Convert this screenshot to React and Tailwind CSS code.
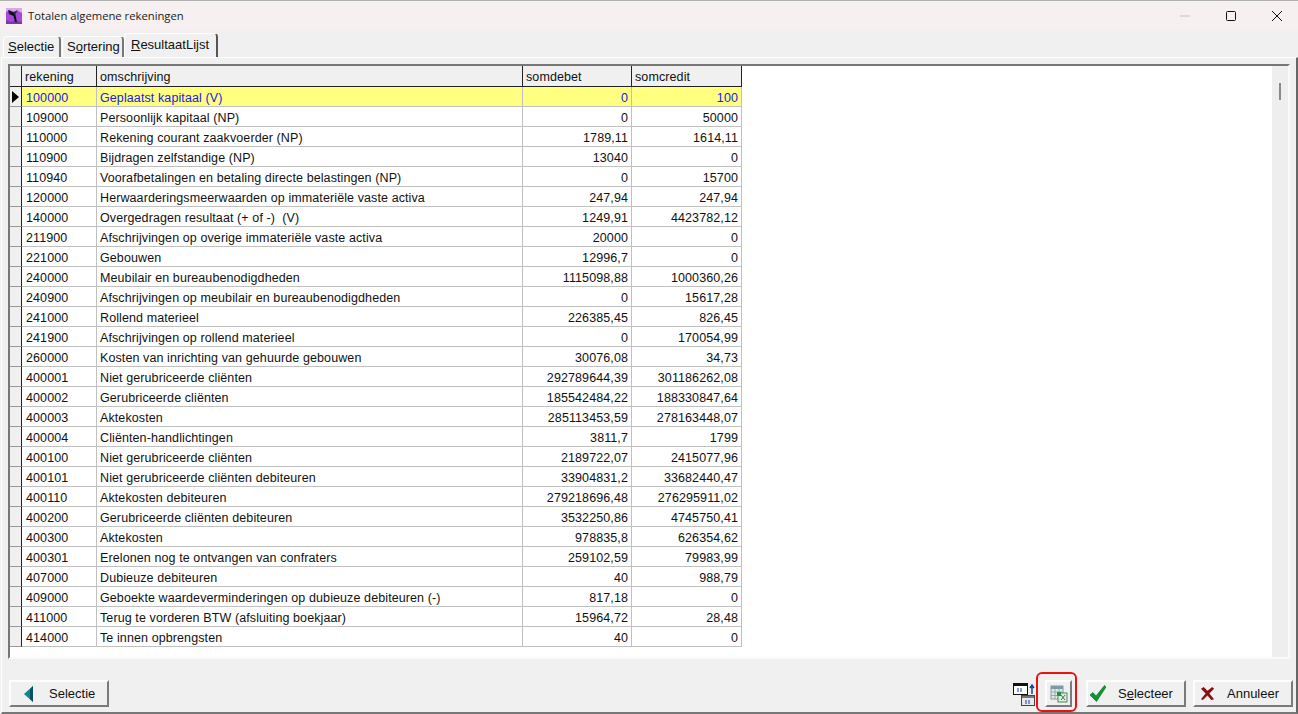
import React from 'react';

const ROWS = [
  ['100000', 'Geplaatst kapitaal (V)', '0', '100'],
  ['109000', 'Persoonlijk kapitaal (NP)', '0', '50000'],
  ['110000', 'Rekening courant zaakvoerder (NP)', '1789,11', '1614,11'],
  ['110900', 'Bijdragen zelfstandige (NP)', '13040', '0'],
  ['110940', 'Voorafbetalingen en betaling directe belastingen (NP)', '0', '15700'],
  ['120000', 'Herwaarderingsmeerwaarden op immateriële vaste activa', '247,94', '247,94'],
  ['140000', 'Overgedragen resultaat (+ of -)  (V)', '1249,91', '4423782,12'],
  ['211900', 'Afschrijvingen op overige immateriële vaste activa', '20000', '0'],
  ['221000', 'Gebouwen', '12996,7', '0'],
  ['240000', 'Meubilair en bureaubenodigdheden', '1115098,88', '1000360,26'],
  ['240900', 'Afschrijvingen op meubilair en bureaubenodigdheden', '0', '15617,28'],
  ['241000', 'Rollend materieel', '226385,45', '826,45'],
  ['241900', 'Afschrijvingen op rollend materieel', '0', '170054,99'],
  ['260000', 'Kosten van inrichting van gehuurde gebouwen', '30076,08', '34,73'],
  ['400001', 'Niet gerubriceerde cliënten', '292789644,39', '301186262,08'],
  ['400002', 'Gerubriceerde cliënten', '185542484,22', '188330847,64'],
  ['400003', 'Aktekosten', '285113453,59', '278163448,07'],
  ['400004', 'Cliënten-handlichtingen', '3811,7', '1799'],
  ['400100', 'Niet gerubriceerde cliënten', '2189722,07', '2415077,96'],
  ['400101', 'Niet gerubriceerde cliënten debiteuren', '33904831,2', '33682440,47'],
  ['400110', 'Aktekosten debiteuren', '279218696,48', '276295911,02'],
  ['400200', 'Gerubriceerde cliënten debiteuren', '3532250,86', '4745750,41'],
  ['400300', 'Aktekosten', '978835,8', '626354,62'],
  ['400301', 'Erelonen nog te ontvangen van confraters', '259102,59', '79983,99'],
  ['407000', 'Dubieuze debiteuren', '40', '988,79'],
  ['409000', 'Geboekte waardeverminderingen op dubieuze debiteuren (-)', '817,18', '0'],
  ['411000', 'Terug te vorderen BTW (afsluiting boekjaar)', '15964,72', '28,48'],
  ['414000', 'Te innen opbrengsten', '40', '0'],
];

const COLS = 'grid grid-cols-[12px_75px_426px_109px_110px]';
const HEAD = 'h-[21px] border-r border-r-[#222] border-b border-b-[#222] pl-[3px] pt-[2px]';

function Bevel({ className = '', children }) {
  return (
    <button className={`flex items-center bg-[#f0f0f0] border-2 border-t-[#fdfdfd] border-l-[#fdfdfd] border-r-[#7a7a7a] border-b-[#7a7a7a] ${className}`}>
      {children}
    </button>
  );
}

function Row({ row, active }) {
  const cell = `h-5 border-r border-b border-[#c0c0c0] pt-[2px] truncate whitespace-pre ${active ? 'bg-[#ffff80] text-[#2020e0]' : 'bg-white text-[#111]'}`;
  return (
    <div className={COLS}>
      <div className="h-5 bg-[#f0f0f0] border-r border-r-[#222] border-b border-b-[#999] flex items-center">
        {active && (
          <svg width="8" height="12" viewBox="0 0 8 12" className="ml-[2px]">
            <path d="M0 0 L7 6 L0 12 Z" fill="#000" />
          </svg>
        )}
      </div>
      <div className={`${cell} pl-1`}>{row[0]}</div>
      <div className={`${cell} pl-[3px]`}>{row[1]}</div>
      <div className={`${cell} text-right pr-[3px]`}>{row[2]}</div>
      <div className={`${cell} text-right pr-[3px]`}>{row[3]}</div>
    </div>
  );
}

function AppIcon() {
  return (
    <svg width="16" height="16" viewBox="0 0 16 16">
      <rect width="16" height="16" fill="#a848d8" />
      <path d="M0 0h16v5L12 3 8 4 4 2 0 4z" fill="#d8a8ec" />
      <path d="M0 12l4 2 5-1 7 1v2H0z" fill="#7838a8" />
      <path d="M2 2 L7 4 L9 5 L11 14 L9 14 L7.5 8 L3 6 Z" fill="#101018" />
      <path d="M7 4 L12 2 L9 7 Z" fill="#303048" />
    </svg>
  );
}

export default function App() {
  return (
    <div className="w-[1298px] h-[714px] overflow-hidden bg-[#f0f0f0] flex flex-col relative font-['Liberation_Sans',sans-serif] text-[12.5px] tracking-[0.1px] text-[#111]">
      {/* title bar */}
      <div className="h-[31px] shrink-0 bg-[#f6f0f0] border-t border-t-[#b0b0b0] flex items-center pl-[6px]">
        <AppIcon />
        <span className="ml-[6px] font-['Open_Sans',sans-serif] text-[11.25px] tracking-normal text-[#222]">Totalen algemene rekeningen</span>
        <div className="ml-auto -mr-[2px] flex items-center">
          <svg width="46" height="30" viewBox="0 0 46 30"><path d="M18 15h10" stroke="#c4c0c0" /></svg>
          <svg width="46" height="30" viewBox="0 0 46 30"><rect x="18.5" y="10.5" width="9" height="9" rx="1" fill="none" stroke="#111" /></svg>
          <svg width="46" height="30" viewBox="0 0 46 30"><path d="M18 10l10 10M28 10L18 20" stroke="#111" fill="none" /></svg>
        </div>
      </div>

      {/* tabs */}
      <div className="h-[26px] shrink-0 flex items-end pl-[3px] text-[13px] tracking-normal">
        <div className="w-[58px] h-[21px] pl-1 border-t border-l border-t-white border-l-white border-r-2 border-r-[#777] rounded-t-sm"><u>S</u>electie</div>
        <div className="w-[62px] h-[21px] pl-1 ml-[1px] border-t border-l border-t-white border-l-white border-r-2 border-r-[#777] rounded-t-sm">S<u>o</u>rtering</div>
        <div className="w-[94px] h-[24px] pl-[6px] pt-[1px] border-t border-l border-t-white border-l-white border-r-2 border-r-[#555] rounded-t-sm bg-[#f0f0f0] relative z-10"><u>R</u>esultaatLijst</div>
      </div>

      {/* panel */}
      <div className="flex-1 min-h-0 flex flex-col border-t border-t-white border-l border-l-white border-b-2 border-b-[#777] border-r-2 border-r-[#666] ml-[1px]">
        <div className="h-[595px] shrink-0 mt-[6px] ml-[6px] mr-[6px] border-t-2 border-t-[#777] border-l-2 border-l-[#777] border-r-2 border-r-[#fafafa] border-b-2 border-b-[#fafafa] bg-white flex overflow-hidden">
          <div className="flex-1 min-w-0 flex flex-col">
            <div className={`${COLS} bg-[#f0f0f0] w-[732px]`}>
              <div className={HEAD} />
              <div className={HEAD}>rekening</div>
              <div className={HEAD}>omschrijving</div>
              <div className={HEAD}>somdebet</div>
              <div className={HEAD}>somcredit</div>
            </div>
            {ROWS.map((row, i) => (
              <Row key={row[0] + i} row={row} active={i === 0} />
            ))}
          </div>
          {/* scrollbar */}
          <div className="w-[16px] shrink-0 bg-[#eeeeee] flex justify-center pt-[17px]">
            <div className="w-[2px] h-[17px] bg-[#8a8a8a]" />
          </div>
        </div>

        {/* bottom buttons */}
        <div className="flex-1 flex items-start pl-[7px] pr-[3px] pt-[21px]">
          <Bevel className="w-[100px] h-[27px] pl-[13px] text-[13px] tracking-normal">
            <svg width="10" height="16" viewBox="0 0 10 16"><path d="M9 0v16L0 8z" fill="#0a8a8a" /><path d="M9 0v16L6 13V3z" fill="#0a5060" /></svg>
            <span className="ml-[15px]">Selectie</span>
          </Bevel>
          <div className="ml-auto flex items-center">
            <button className="w-[25px] h-[27px] flex items-center justify-center">
              <svg width="24" height="24" viewBox="0 0 24 24">
                <rect x="1.5" y="1.5" width="14" height="11" fill="#fff" stroke="#111" />
                <path d="M2 2h13v2H2z" fill="#111" />
                <path d="M5 7h2M8 7h2M5 9h2M8 9h2" stroke="#1a3ab0" />
                <rect x="9.5" y="13.5" width="13" height="10" fill="#e8e8e8" stroke="#444" />
                <path d="M10 14h12v2H10z" fill="#777" />
                <path d="M13 19h2M16 19h2M13 21h2M16 21h2" stroke="#1a3ab0" />
                <path d="M20 12V4M18 6l2-3 2 3" stroke="#0a4a8a" strokeWidth="1.5" fill="none" />
              </svg>
            </button>
            <div className="relative ml-[9px]">
              <Bevel className="w-[27px] h-[27px] justify-center">
                <svg width="18" height="18" viewBox="0 0 18 18">
                  <rect x="1" y="1" width="12" height="13" fill="#dfe8e4" stroke="#8a9a9a" />
                  <path d="M1 1h12v3H1z" fill="#7a9aa8" />
                  <path d="M1 7h12M1 10.5h12M5 4v10M9 4v10" stroke="#9aaaaa" />
                  <rect x="8" y="8" width="9" height="9" fill="#e0ece0" stroke="#4a8a5a" />
                  <path d="M7 7h4v4H7z" fill="#2a8a4a" />
                  <path d="M11 10l4 5M15 10l-4 5" stroke="#3a7a4a" />
                </svg>
              </Bevel>
              <div className="absolute -left-[9px] -top-[8px] w-[41px] h-[40px] border-2 border-[#f01010] rounded-[6px]" />
            </div>
            <Bevel className="w-[100px] h-[27px] ml-[14px] text-[13px] tracking-normal">
              <svg width="18" height="17" viewBox="0 0 18 17" className="ml-[1px]">
                <path d="M1 10l3-2.5 3 3.5L15.5 0.5 17 2 7.5 16.5z" fill="#0a9a2a" stroke="#063" strokeWidth="0.6" />
              </svg>
              <span className="ml-[11px]">S<u>e</u>lecteer</span>
            </Bevel>
            <Bevel className="w-[100px] h-[27px] ml-[7px] pl-[5px] text-[13px] tracking-normal">
              <svg width="15" height="15" viewBox="0 0 16 16">
                <path d="M1 3l3-2 4 4 5-4 2 2-5 5 5 6-3 1-4-5-5 5-2-1 5-6z" fill="#8a1010" />
              </svg>
              <span className="ml-[12px]">Annuleer</span>
            </Bevel>
          </div>
        </div>
      </div>
    </div>
  );
}
